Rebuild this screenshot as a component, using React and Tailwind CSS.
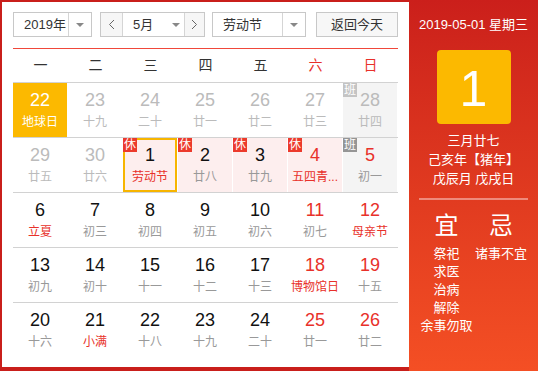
import React from 'react'

const rows = [
  [
    { d: 22, l: '地球日', today: true },
    { d: 23, l: '十九', faded: true },
    { d: 24, l: '二十', faded: true },
    { d: 25, l: '廿一', faded: true },
    { d: 26, l: '廿二', faded: true },
    { d: 27, l: '廿三', faded: true },
    { d: 28, l: '廿四', faded: true, ban: true },
  ],
  [
    { d: 29, l: '廿五', faded: true },
    { d: 30, l: '廿六', faded: true },
    { d: 1, l: '劳动节', xiu: true, fest: true, selected: true },
    { d: 2, l: '廿八', xiu: true },
    { d: 3, l: '廿九', xiu: true },
    { d: 4, l: '五四青...', xiu: true, fest: true, red: true },
    { d: 5, l: '初一', ban: true, red: true },
  ],
  [
    { d: 6, l: '立夏', fest: true },
    { d: 7, l: '初三' },
    { d: 8, l: '初四' },
    { d: 9, l: '初五' },
    { d: 10, l: '初六' },
    { d: 11, l: '初七', red: true },
    { d: 12, l: '母亲节', red: true, fest: true },
  ],
  [
    { d: 13, l: '初九' },
    { d: 14, l: '初十' },
    { d: 15, l: '十一' },
    { d: 16, l: '十二' },
    { d: 17, l: '十三' },
    { d: 18, l: '博物馆日', red: true, fest: true },
    { d: 19, l: '十五', red: true },
  ],
  [
    { d: 20, l: '十六' },
    { d: 21, l: '小满', fest: true },
    { d: 22, l: '十八' },
    { d: 23, l: '十九' },
    { d: 24, l: '二十' },
    { d: 25, l: '廿一', red: true },
    { d: 26, l: '廿二', red: true },
  ],
]

const weekdays = ['一', '二', '三', '四', '五', '六', '日']

const Caret = () => (
  <span className="w-0 h-0 border-l-[4px] border-r-[4px] border-t-[4px] border-l-transparent border-r-transparent border-t-[#888]" />
)

const Chevron = ({ dir }) => (
  <svg width="7" height="11" viewBox="0 0 7 11">
    <polyline
      points={dir === 'left' ? '6,1 1.5,5.5 6,10' : '1,1 5.5,5.5 1,10'}
      fill="none"
      stroke="#666"
      strokeWidth="1"
    />
  </svg>
)

const Cell = ({ c }) => {
  let bg = ''
  if (c.today) bg = 'bg-[#fcb900]'
  else if (c.xiu) bg = 'bg-[#fdeeee]'
  else if (c.ban) bg = 'bg-[#f4f4f4]'

  let numColor = 'text-[#111]'
  if (c.today) numColor = 'text-white'
  else if (c.faded) numColor = 'text-[#bbb]'
  else if (c.red) numColor = 'text-[#e8312a]'

  let lunarColor = 'text-[#999]'
  if (c.today) lunarColor = 'text-white'
  else if (c.faded) lunarColor = 'text-[#bbb]'
  else if (c.fest) lunarColor = 'text-[#e8312a]'

  return (
    <div className="w-[55px] h-[54px] pr-px">
      <div
        className={`relative w-[54px] h-[54px] flex flex-col items-center border-2 ${
          c.selected ? 'border-[#f7b500]' : 'border-transparent'
        } ${bg}`}
      >
        {c.xiu && (
          <span className="absolute -top-[2px] -left-[2px] w-[14px] h-[14px] bg-[#ec3a2c] text-white text-[12px] leading-[14px] text-center">
            休
          </span>
        )}
        {c.ban && (
          <span
            className={`absolute -top-[2px] -left-[2px] w-[14px] h-[14px] text-white text-[12px] leading-[14px] text-center ${
              c.faded ? 'bg-[#c4c4c4]' : 'bg-[#959595]'
            }`}
          >
            班
          </span>
        )}
        <div className={`mt-[6px] text-[18px] leading-[18px] ${numColor}`}>{c.d}</div>
        <div className={`mt-[5px] text-[12px] leading-[16px] whitespace-nowrap ${lunarColor}`}>{c.l}</div>
      </div>
    </div>
  )
}

export default function App() {
  return (
    <div className="w-[538px] h-[371px] flex bg-[#c91f1b] font-['Liberation_Sans','Noto_Sans_CJK_SC',sans-serif] overflow-hidden">
      <div className="w-[409px] h-full pt-[2px] pl-[2px] pb-[4px]">
        <div className="w-full h-full bg-white pl-[11px] pt-[10px]">
          {/* controls */}
          <div className="flex h-[25px] text-[13px] text-[#333]">
            <div className="w-[79px] h-full flex border border-[#c8c8c8] bg-white">
              <div className="w-[55px] pl-[10px] leading-[23px] border-r border-[#d5d5d5]">2019年</div>
              <div className="flex-1 flex items-center justify-center">
                <Caret />
              </div>
            </div>
            <div className="ml-[8px] w-[105px] h-full flex border border-[#c8c8c8] bg-white">
              <div className="w-[22px] flex items-center justify-center bg-[#f6f6f6] border-r border-[#d5d5d5]">
                <Chevron dir="left" />
              </div>
              <div className="w-[62px] flex items-center pl-[10px] border-r border-[#d5d5d5]">
                <span>5月</span>
                <span className="ml-[19px] flex">
                  <Caret />
                </span>
              </div>
              <div className="flex-1 flex items-center justify-center bg-[#f6f6f6]">
                <Chevron dir="right" />
              </div>
            </div>
            <div className="ml-[7px] w-[94px] h-full flex border border-[#c8c8c8] bg-white">
              <div className="w-[70px] pl-[10px] leading-[23px] border-r border-[#d5d5d5]">劳动节</div>
              <div className="flex-1 flex items-center justify-center">
                <Caret />
              </div>
            </div>
            <div className="ml-[10px] w-[82px] h-full border border-[#c8c8c8] bg-[#f7f7f7] text-center leading-[23px]">
              返回今天
            </div>
          </div>

          <div className="mt-[11px] w-[385px] h-px bg-[#f0473a]" />

          {/* weekday header */}
          <div className="flex h-[33px] w-[385px] text-[14px]">
            {weekdays.map((w, i) => (
              <div
                key={w}
                className={`w-[55px] flex items-center justify-center ${i >= 5 ? 'text-[#e8312a]' : 'text-[#333]'}`}
              >
                {w}
              </div>
            ))}
          </div>

          {/* grid */}
          <div className="w-[385px]">
            {rows.map((r, i) => (
              <div key={i} className="flex border-t border-[#d2d2d2]">
                {r.map((c, j) => (
                  <Cell key={j} c={c} />
                ))}
              </div>
            ))}
          </div>
        </div>
      </div>

      {/* side panel */}
      <div className="flex-1 h-full bg-linear-to-b from-[#cb1f1b] to-[#f44f24] flex flex-col items-center text-white">
        <div className="mt-[17px] text-[13px] leading-[16px] whitespace-nowrap">2019-05-01 星期三</div>
        <div className="mt-[17px] w-[74px] h-[74px] rounded-[4px] bg-[#fcb900] flex items-center justify-center text-[50px] leading-none pt-[4px]">
          1
        </div>
        <div className="mt-[7px] text-[13px] leading-[19px] text-center whitespace-nowrap">
          <div>三月廿七</div>
          <div>己亥年【猪年】</div>
          <div>戊辰月 戊戌日</div>
        </div>
        <div className="mt-[10px] w-[109px] h-[2px] bg-[#ee8a7c]" />
        <div className="mt-[12px] w-[109px] flex">
          <div className="w-[55px] flex flex-col items-center">
            <div className="text-[24px] leading-[28px]">宜</div>
            <div className="mt-[5px] text-[13px] leading-[18px] text-center whitespace-nowrap">
              <div>祭祀</div>
              <div>求医</div>
              <div>治病</div>
              <div>解除</div>
              <div>余事勿取</div>
            </div>
          </div>
          <div className="w-[54px] flex flex-col items-center">
            <div className="text-[24px] leading-[28px]">忌</div>
            <div className="mt-[5px] text-[13px] leading-[18px] text-center whitespace-nowrap">
              <div>诸事不宜</div>
            </div>
          </div>
        </div>
      </div>
    </div>
  )
}
